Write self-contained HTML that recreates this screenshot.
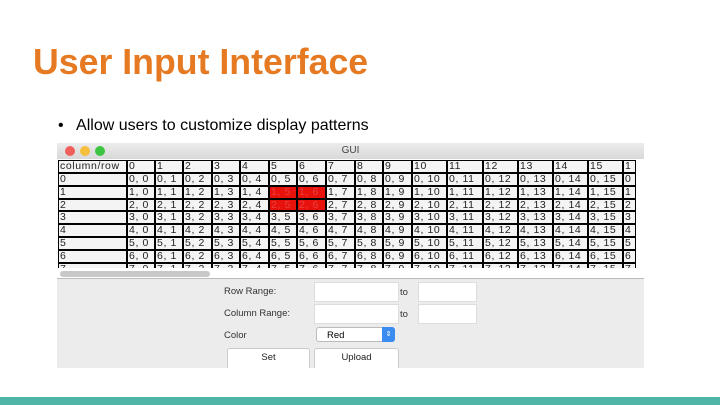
<!DOCTYPE html>
<html><head><meta charset="utf-8"><style>
body{margin:0;width:720px;height:405px;background:#fff;position:relative;overflow:hidden;font-family:"Liberation Sans",sans-serif}
.a{position:absolute}
#t{left:33px;top:42px;font-size:35.7px;font-weight:bold;color:#e67a22;white-space:nowrap}
#b{left:58px;top:117px;font-size:16px;color:#000;white-space:nowrap}
#win{left:57px;top:143px;width:587px;height:225px;background:#ececec;overflow:hidden}
#tb{left:0;top:0;width:587px;height:16px;background:linear-gradient(#ececec,#d8d8d8);font-size:10px;color:#444;text-align:center;line-height:16px}
.dot{width:10px;height:10px;border-radius:50%;top:3px}
#grid{position:absolute;left:0;top:16px;width:587px;height:109px;overflow:hidden}
.c{position:absolute;box-sizing:border-box;border:1px solid #000;font-size:10.5px;line-height:11px;padding-left:1px;color:#222;background:#f4f4f4;white-space:nowrap;overflow:hidden;letter-spacing:0.6px}
.in{background:#fff;border:1px solid #ddd}
.lb{font-size:9.5px;color:#333}
.btn{background:#fff;border:1px solid #ccc;border-radius:3px;font-size:9.5px;text-align:center;line-height:18px;color:#222}
</style></head><body>
<div class="a" id="t">User Input Interface</div>
<div class="a" id="b">•&nbsp;&nbsp; Allow users to customize display patterns</div>
<div class="a" id="win">
<div class="a" id="tb">GUI</div>
<div class="a dot" style="left:8px;background:#f0605a"></div>
<div class="a dot" style="left:23px;background:#f5be3b"></div>
<div class="a dot" style="left:38px;background:#3ec443"></div>
<div class="a" style="left:0;top:16px;width:587px;height:120px;background:#fff"></div>
<div id="grid"></div>
<div class="a" style="left:3px;top:128px;width:150px;height:6px;border-radius:3px;background:#c8c8c8"></div>
<div class="a" style="left:604px;top:18px;width:7px;height:20px;border-radius:3px;background:#c8c8c8"></div>
<div class="a" style="left:0;top:135px;width:587px;height:1px;background:#bbb"></div>
<div class="a lb" style="left:167px;top:143px">Row Range:</div>
<div class="a in" style="left:257px;top:139px;width:83px;height:18px"></div>
<div class="a lb" style="left:343px;top:144px">to</div>
<div class="a in" style="left:361px;top:139px;width:57px;height:18px"></div>
<div class="a lb" style="left:167px;top:165px">Column Range:</div>
<div class="a in" style="left:257px;top:161px;width:83px;height:18px"></div>
<div class="a lb" style="left:343px;top:166px">to</div>
<div class="a in" style="left:361px;top:161px;width:57px;height:18px"></div>
<div class="a lb" style="left:167px;top:187px">Color</div>
<div class="a" style="left:259px;top:184px;width:79px;height:15px;background:#fff;border:1px solid #bbb;border-radius:3px;font-size:9.5px;line-height:15px;box-sizing:border-box;padding-left:10px">Red</div>
<div class="a" style="left:325px;top:184px;width:13px;height:15px;background:#3b8cf0;border-radius:0 3px 3px 0;color:#fff;font-size:7px;text-align:center;line-height:15px">⇕</div>
<div class="a btn" style="left:170px;top:205px;width:81px;height:22px">Set</div>
<div class="a btn" style="left:257px;top:205px;width:83px;height:22px">Upload</div>
</div>
<div class="a" style="left:0;top:397px;width:720px;height:8px;background:#4eb5a7"></div>
<script>
var xs=[58,127,155,183,212,240,269,297,326,355,383,412,447,483,518,553,588,623,636];
var ys=[160,173,186,199,211,224,237,250,263,276];
var h='';
for(var r=0;r<9;r++){for(var c=0;c<18;c++){
var txt;
if(r==0)txt=c==0?'column/row':(c-1)+'';
else txt=c==0?(r-1)+'':(r-1)+', '+(c-1);
if(c==17)txt=(r==0?'1':(r-1)+'');
var red=(r==2||r==3)&&(c==6||c==7);
var w=xs[c+1]-xs[c], hh=ys[r+1]-ys[r];
h+='<div class="c" style="left:'+(xs[c]-57)+'px;top:'+(ys[r]-159)+'px;width:'+w+'px;height:'+hh+'px;'+(red?'background:#e8120c;color:#e84040;':'')+'">'+txt+'</div>';
}}
document.getElementById('grid').innerHTML=h;
</script>
</body></html>
